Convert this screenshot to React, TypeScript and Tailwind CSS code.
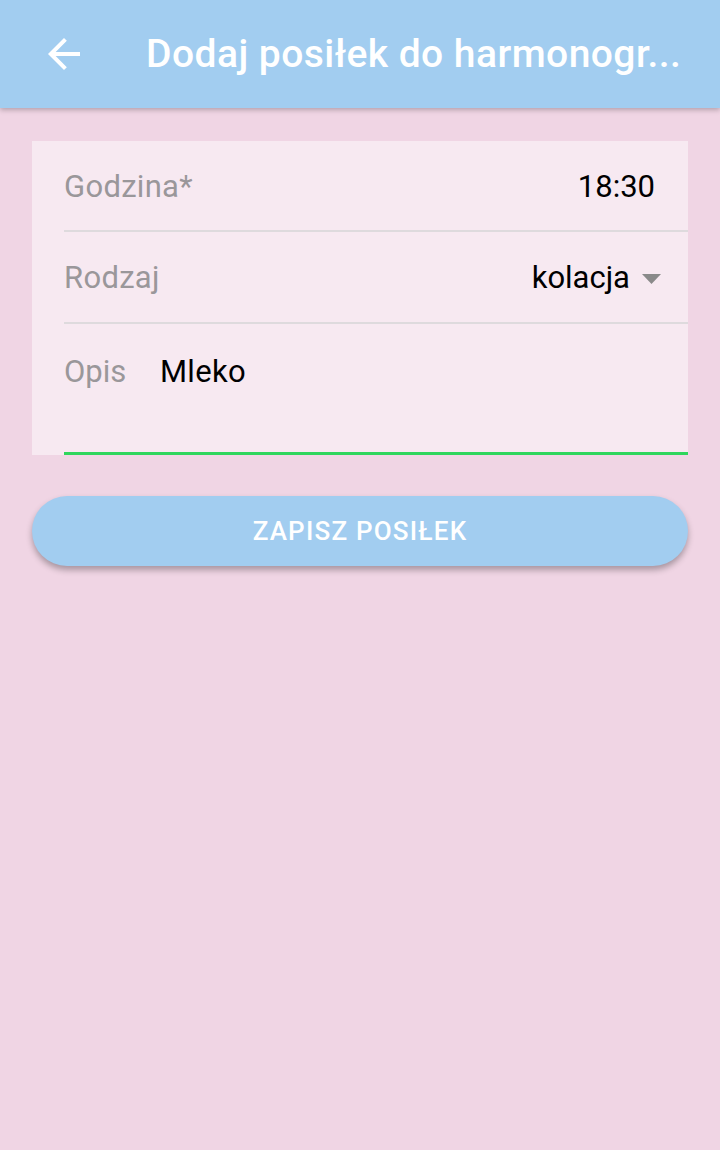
import React from 'react';

export default function App() {
  return (
    <div className="relative w-[720px] h-[1150px] bg-[#f0d5e4] overflow-hidden font-['Roboto',sans-serif]">
      {/* App bar */}
      <header className="h-[108px] bg-[#a2cdf0] flex items-center shadow-[0_2px_5px_rgba(0,0,0,0.25)] relative z-10">
        <div className="w-[128px] shrink-0 flex items-center justify-center">
          <svg width="48" height="48" viewBox="0 0 24 24" fill="#ffffff">
            <path d="M20 11H7.83l5.59-5.59L12 4l-8 8 8 8 1.41-1.41L7.83 13H20v-2z" />
          </svg>
        </div>
        <h1 className="pl-[18px] text-white text-[39px] font-medium tracking-[0.45px] whitespace-nowrap leading-none">
          Dodaj posiłek do harmonogr...
        </h1>
      </header>

      <main className="px-8 pt-[33px]">
        {/* Form card */}
        <div className="bg-[#f7e9f1] pl-8">
          <div className="h-[91px] flex items-center justify-between pt-[3px] pr-[33px] border-b-2 border-[#dedadd]">
            <span className="text-[31px] tracking-[0.3px] text-[#9a979a]">Godzina*</span>
            <span className="text-[31px] text-black">18:30</span>
          </div>
          <div className="h-[92px] flex items-center justify-between pt-[3px] pr-[27px] border-b-2 border-[#dedadd]">
            <span className="text-[31px] tracking-[0.3px] text-[#9a979a]">Rodzaj</span>
            <div className="flex items-center gap-[12px]">
              <span className="text-[31px] text-black">kolacja</span>
              <svg width="19" height="10" viewBox="0 0 19 10">
                <polygon points="0,0 19,0 9.5,10" fill="#8a8a8a" />
              </svg>
            </div>
          </div>
          <div className="h-[131px] border-b-[3px] border-[#2fd65c] flex items-start pt-[30px]">
            <span className="text-[31px] text-[#9a979a] w-[96px] leading-[36px]">Opis</span>
            <span className="text-[31px] tracking-[0.3px] text-black leading-[36px]">Mleko</span>
          </div>
        </div>

        {/* Save button */}
        <button
          type="button"
          className="mt-[41px] w-full h-[70px] rounded-full bg-[#a2cdf0] text-white text-[26px] font-medium uppercase tracking-[1.2px] shadow-[0_4px_6px_rgba(0,0,0,0.3)]"
        >
          Zapisz posiłek
        </button>
      </main>
    </div>
  );
}
